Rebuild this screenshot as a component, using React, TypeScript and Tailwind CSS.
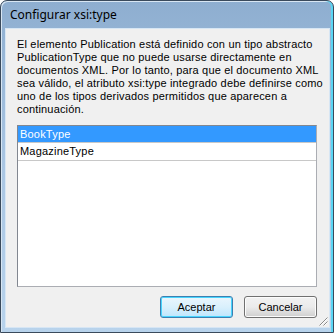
import React from "react";

export default function App() {
  const font = { fontFamily: '"Liberation Sans", Arial, sans-serif' };
  return (
    <div className="w-[334px] h-[333px] bg-white">
      <div className="w-[334px] h-[333px] rounded-t-[7px] border border-[#3a4a5c] bg-gradient-to-b from-[#8eaed0] via-[#aac6e3] to-[#b8d3ec] flex flex-col overflow-hidden shadow-[inset_-2px_0_0_#5ad6f4,inset_1px_1px_0_#d8e6f3]">
        <div className="h-[27px] shrink-0 flex items-center pl-[9px] pt-[1px]">
          <span className="text-[12px] text-black" style={{ fontFamily: '"Noto Sans", "Open Sans", sans-serif' }}>
            Configurar xsi:type
          </span>
        </div>
        <div className="relative flex-1 mx-[3px] mb-[4px] ml-[4px] border border-[#d7e6f4] bg-[#f0f0f0] flex flex-col pl-[11px] pr-[13px] pt-[9px] pb-[9px]" style={font}>
          <p className="text-[11px] leading-[13px] text-black tracking-[0.17px] whitespace-nowrap">
            El elemento Publication está definido con un tipo abstracto<br />
            PublicationType que no puede usarse directamente en<br />
            documentos XML. Por lo tanto, para que el documento XML<br />
            sea válido, el atributo xsi:type integrado debe definirse como<br />
            uno de los tipos derivados permitidos que aparecen a<br />
            continuación.
          </p>
          <div className="mt-[9px] w-[300px] h-[162px] border border-[#abadb3] border-t-[#828790] border-l-[#828790] bg-white flex flex-col text-[11px] tracking-[0.2px]">
            <div className="h-[17px] bg-[#3399ff] text-white flex items-center pl-[2px] border-b border-[#c8c8c8]">BookType</div>
            <div className="h-[18px] text-black flex items-center pl-[2px] border-b border-[#c8c8c8]">MagazineType</div>
          </div>
          <div className="mt-[9px] flex justify-end gap-[11px] w-[300px]">
            <button className="w-[73px] h-[22px] rounded-[3px] border border-[#3c7fb1] bg-gradient-to-b from-[#eaf6fd] via-[#d9f0fc] to-[#bee6fd] text-[11px] text-black shadow-[inset_0_0_0_1px_#48d4fd]" style={font}>
              Aceptar
            </button>
            <button className="w-[73px] h-[22px] rounded-[3px] border border-[#707070] bg-gradient-to-b from-[#f2f2f2] via-[#ebebeb] to-[#cfcfcf] text-[11px] text-black shadow-[inset_0_0_0_1px_#fcfcfc]" style={font}>
              Cancelar
            </button>
          </div>
          <svg className="absolute right-[1px] bottom-[1px]" width="11" height="11" viewBox="0 0 11 11">
            <path d="M10.5 2.5 L2.5 10.5 M10.5 6.5 L6.5 10.5" stroke="#8a8a8a" strokeWidth="1" />
            <path d="M10.5 3.5 L3.5 10.5 M10.5 7.5 L7.5 10.5" stroke="#ffffff" strokeWidth="1" />
          </svg>
        </div>
      </div>
    </div>
  );
}
